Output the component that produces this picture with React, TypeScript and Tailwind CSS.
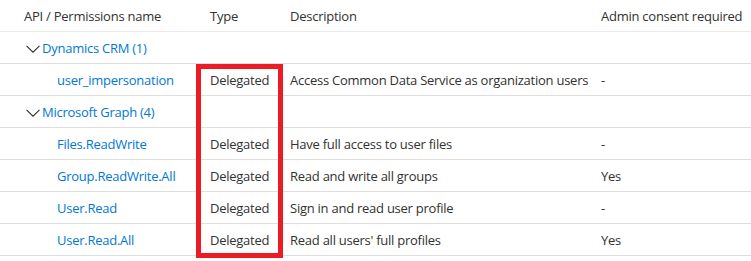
import React from "react";

const Chevron = () => (
  <svg width="14" height="8" viewBox="0 0 14 8" className="mr-[2px] shrink-0">
    <path d="M0.5 0.8 L7 7.2 L13.5 0.8" fill="none" stroke="#323130" strokeWidth="1.1" />
  </svg>
);

type Row =
  | { kind: "group"; name: string }
  | { kind: "perm"; name: string; type: string; desc: string; admin: string };

const rows: Row[] = [
  { kind: "group", name: "Dynamics CRM (1)" },
  { kind: "perm", name: "user_impersonation", type: "Delegated", desc: "Access Common Data Service as organization users", admin: "-" },
  { kind: "group", name: "Microsoft Graph (4)" },
  { kind: "perm", name: "Files.ReadWrite", type: "Delegated", desc: "Have full access to user files", admin: "-" },
  { kind: "perm", name: "Group.ReadWrite.All", type: "Delegated", desc: "Read and write all groups", admin: "Yes" },
  { kind: "perm", name: "User.Read", type: "Delegated", desc: "Sign in and read user profile", admin: "-" },
  { kind: "perm", name: "User.Read.All", type: "Delegated", desc: "Read all users' full profiles", admin: "Yes" },
];

export default function App() {
  return (
    <div
      className="relative w-[751px] h-[261px] bg-white text-[13px] tracking-[-0.25px] text-[#323130] overflow-hidden whitespace-nowrap"
      style={{ fontFamily: '"Open Sans", "Noto Sans", Arial, sans-serif' }}
    >
      <div className="grid grid-cols-[210px_80px_311px_1fr] h-[32px] pt-[2px] items-center border-b border-[#edebe9]">
        <div className="pl-6">API / Permissions name</div>
        <div>Type</div>
        <div>Description</div>
        <div>Admin consent required</div>
      </div>
      {rows.map((r, i) =>
        r.kind === "group" ? (
          <div key={i} className="flex h-[32px] pt-[2px] items-center border-b border-[#e1dfdd] pl-[26px] text-[#0078d4]">
            <Chevron />
            <span>{r.name}</span>
          </div>
        ) : (
          <div key={i} className="grid grid-cols-[210px_80px_311px_1fr] h-[32px] pt-[2px] items-center border-b border-[#e1dfdd]">
            <div className="pl-[57px] text-[#0078d4]">{r.name}</div>
            <div>{r.type}</div>
            <div>{r.desc}</div>
            <div>{r.admin}</div>
          </div>
        )
      )}
      <div className="absolute left-[196px] top-[64px] w-[87px] h-[194px] border-[5px] border-[#ed1c24]" />
    </div>
  );
}
